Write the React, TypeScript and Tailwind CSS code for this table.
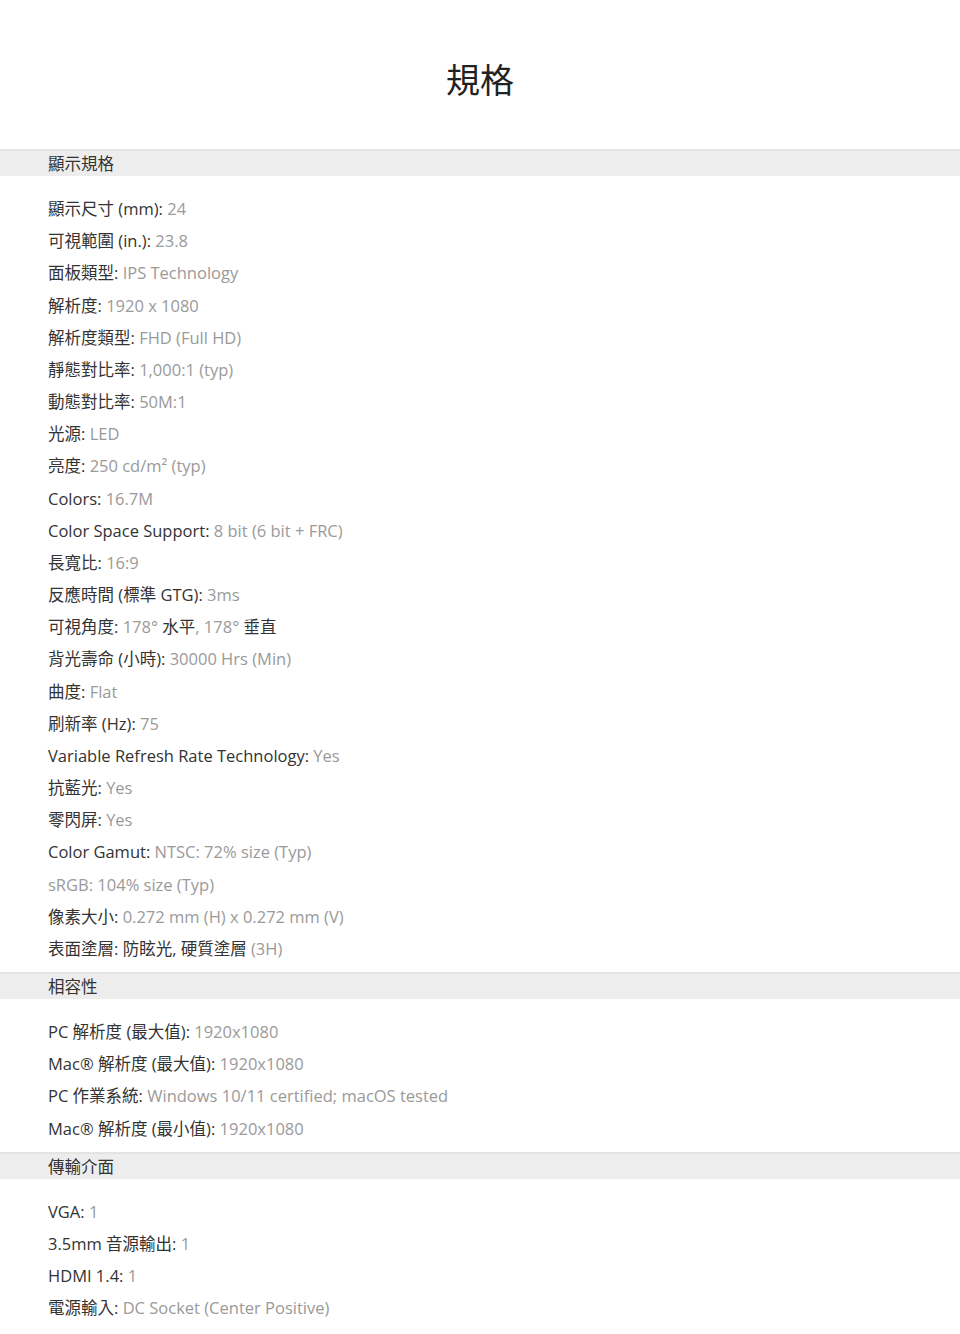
type Item = { label: string; value: React.ReactNode };

const dark = 'text-[#333333]';

const sections: { title: string; items: Item[] }[] = [
  {
    title: '顯示規格',
    items: [
      { label: '顯示尺寸 (mm)', value: '24' },
      { label: '可視範圍 (in.)', value: '23.8' },
      { label: '面板類型', value: 'IPS Technology' },
      { label: '解析度', value: '1920 x 1080' },
      { label: '解析度類型', value: 'FHD (Full HD)' },
      { label: '靜態對比率', value: '1,000:1 (typ)' },
      { label: '動態對比率', value: '50M:1' },
      { label: '光源', value: 'LED' },
      { label: '亮度', value: '250 cd/m² (typ)' },
      { label: 'Colors', value: '16.7M' },
      { label: 'Color Space Support', value: '8 bit (6 bit + FRC)' },
      { label: '長寬比', value: '16:9' },
      { label: '反應時間 (標準 GTG)', value: '3ms' },
      {
        label: '可視角度',
        value: (
          <>
            178° <span className={dark}>水平</span>, 178° <span className={dark}>垂直</span>
          </>
        ),
      },
      { label: '背光壽命 (小時)', value: '30000 Hrs (Min)' },
      { label: '曲度', value: 'Flat' },
      { label: '刷新率 (Hz)', value: '75' },
      { label: 'Variable Refresh Rate Technology', value: 'Yes' },
      { label: '抗藍光', value: 'Yes' },
      { label: '零閃屏', value: 'Yes' },
      { label: 'Color Gamut', value: 'NTSC: 72% size (Typ)' },
      { label: '', value: 'sRGB: 104% size (Typ)' },
      { label: '像素大小', value: '0.272 mm (H) x 0.272 mm (V)' },
      {
        label: '表面塗層',
        value: (
          <>
            <span className={dark}>防眩光, 硬質塗層</span> (3H)
          </>
        ),
      },
    ],
  },
  {
    title: '相容性',
    items: [
      { label: 'PC 解析度 (最大值)', value: '1920x1080' },
      { label: 'Mac® 解析度 (最大值)', value: '1920x1080' },
      { label: 'PC 作業系統', value: 'Windows 10/11 certified; macOS tested' },
      { label: 'Mac® 解析度 (最小值)', value: '1920x1080' },
    ],
  },
  {
    title: '傳輸介面',
    items: [
      { label: 'VGA', value: '1' },
      { label: '3.5mm 音源輸出', value: '1' },
      { label: 'HDMI 1.4', value: '1' },
      { label: '電源輸入', value: 'DC Socket (Center Positive)' },
    ],
  },
];

export default function App() {
  return (
    <div
      className="min-h-screen bg-white text-[#333333]"
      style={{ fontFamily: '"Open Sans", "Noto Sans CJK TC", sans-serif' }}
    >
      <h1 className="pt-[56px] pb-[45px] text-center text-[34px] leading-[48px] font-normal text-[#222222]">
        規格
      </h1>
      {sections.map((s) => (
        <section key={s.title}>
          <div className="h-[27px] border-t-2 border-[#e4e4e4] bg-[#ededed] pl-12 text-[16.5px] leading-[26px] text-[#333333]">
            {s.title}
          </div>
          <ul className="pt-[17px] pb-[7px] pl-12">
            {s.items.map((it, i) => (
              <li key={i} className="text-[16.5px] leading-[32.17px]">
                {it.label && <span className="text-[#333333]">{it.label}: </span>}
                <span className="text-[#9a9a9a]">{it.value}</span>
              </li>
            ))}
          </ul>
        </section>
      ))}
    </div>
  );
}
